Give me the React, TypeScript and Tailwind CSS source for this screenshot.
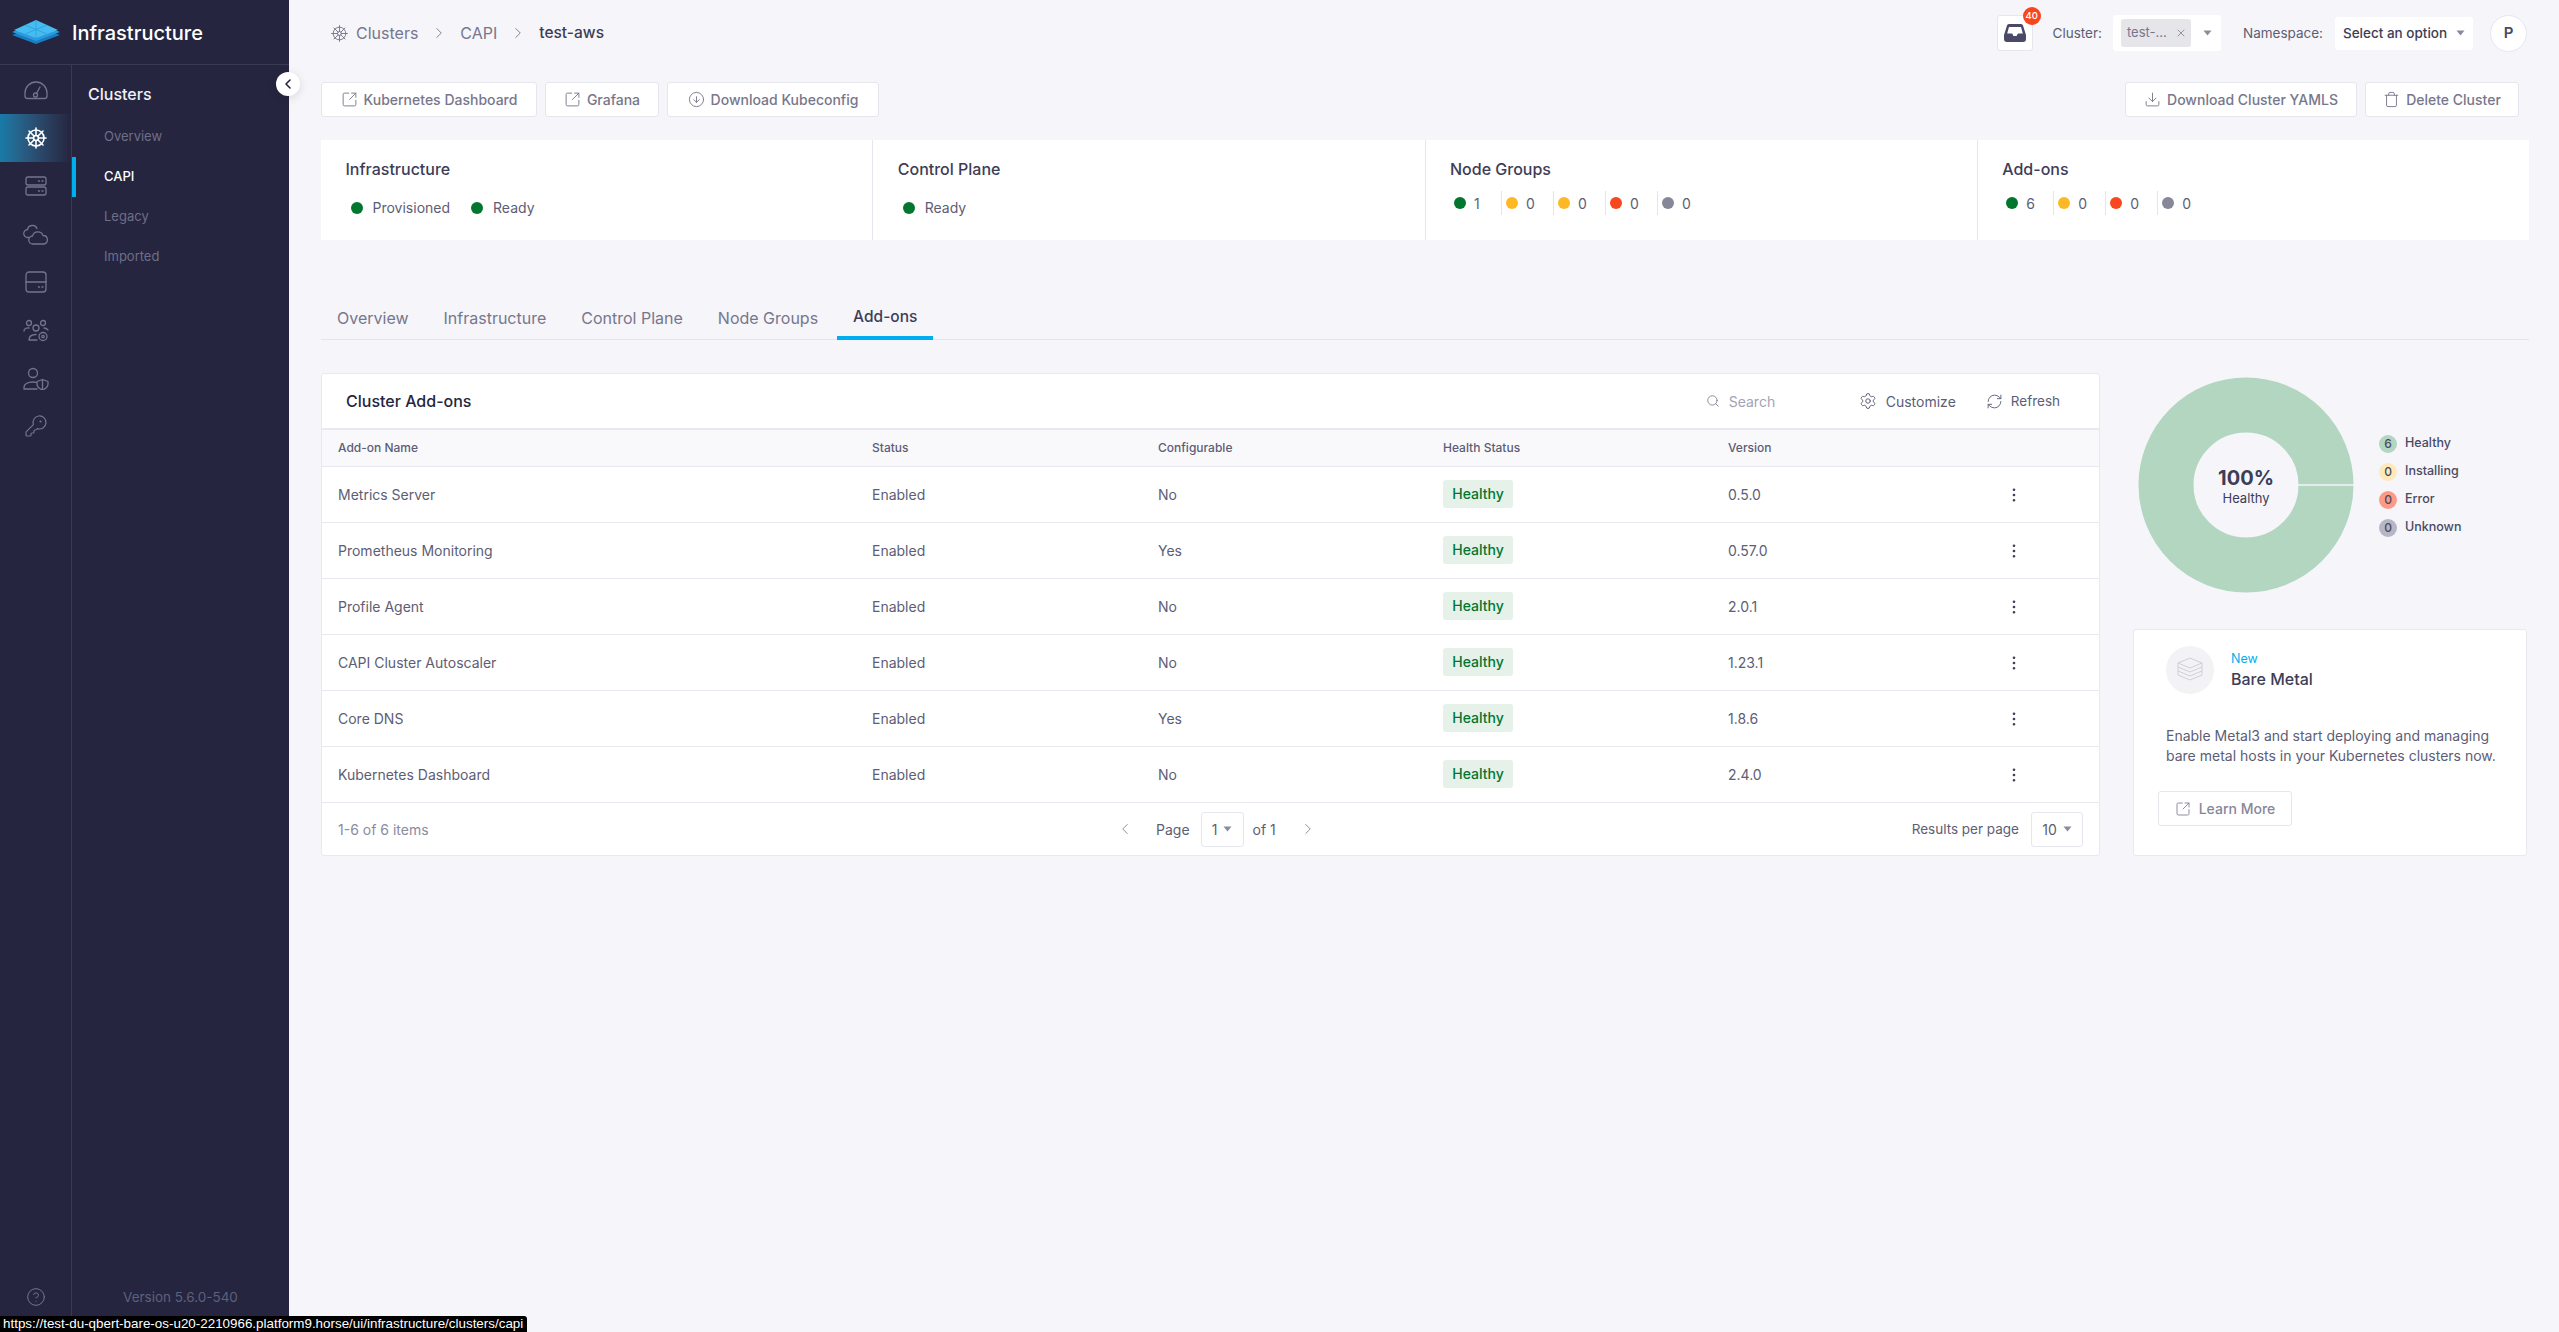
import {
  ChevronLeft,
  ChevronRight,
  CircleArrowDown,
  CircleHelp,
  Download,
  EllipsisVertical,
  KeyRound,
  RefreshCw,
  Search,
  Settings,
  ShipWheel,
  SquareArrowOutUpRight,
  Trash,
  X,
} from "lucide-react";

const addons = [
  { name: "Metrics Server", configurable: "No", version: "0.5.0" },
  { name: "Prometheus Monitoring", configurable: "Yes", version: "0.57.0" },
  { name: "Profile Agent", configurable: "No", version: "2.0.1" },
  { name: "CAPI Cluster Autoscaler", configurable: "No", version: "1.23.1" },
  { name: "Core DNS", configurable: "Yes", version: "1.8.6" },
  { name: "Kubernetes Dashboard", configurable: "No", version: "2.4.0" },
];

function Caret({ className = "text-[#8b8b9e]" }: { className?: string }) {
  return (
    <svg width="9" height="6" viewBox="0 0 9 6" className={className}>
      <path d="M0.5 0.5h8L4.5 5.5z" fill="currentColor" />
    </svg>
  );
}

function Logo() {
  return (
    <svg width="50" height="24" viewBox="0 0 50 24">
      <path d="M25 6 49 15 25 24 1 15z" fill="#1a7cc4" />
      <path d="M25 3 49 12 25 21 1 12z" fill="#2a9bdc" />
      <path d="M25 0 47 10 25 18 3 10z" fill="#45bdf0" />
      <path d="M14 5 36 14M36 5 14 14M25 0v18" stroke="#2a9bdc" strokeWidth="0.7" fill="none" />
    </svg>
  );
}

function RailSvg({ children }: { children: React.ReactNode }) {
  return (
    <svg width="26" height="24" viewBox="0 0 26 24" fill="none" stroke="#74758c" strokeWidth="1.3" strokeLinecap="round" strokeLinejoin="round">
      {children}
    </svg>
  );
}

const railIcons = [
  <RailSvg key="gauge">
    <path d="M4.5 20.5C2.8 20.5 2 19.6 2 18V15A11 11 0 0 1 24 15V18C24 19.6 23.2 20.5 21.5 20.5Z" />
    <path d="M13.5 15.5 17 9" />
    <circle cx="12.5" cy="17" r="2" />
  </RailSvg>,
  <ShipWheel key="wheel" size={24} color="#ffffff" strokeWidth={1.6} />,
  <RailSvg key="server">
    <rect x="3" y="3" width="20" height="8" rx="2" />
    <rect x="3" y="13" width="20" height="8" rx="2" />
    <path d="M15.5 7h1M19 7h1M15.5 17h1M19 17h1" />
  </RailSvg>,
  <RailSvg key="clouds">
    <path d="M6 15.5H5A4 4 0 0 1 4.5 7.5 5 5 0 0 1 14 6.5" />
    <path d="M10 22a4 4 0 0 1-.5-8 5.5 5.5 0 0 1 10.5-.5 4.3 4.3 0 0 1 1 8.5z" />
  </RailSvg>,
  <RailSvg key="disk">
    <rect x="3" y="2" width="20" height="20" rx="3" />
    <path d="M3 12h20M15.5 17h1M19 17h1" />
  </RailSvg>,
  <RailSvg key="users">
    <circle cx="6" cy="5" r="2.5" />
    <circle cx="20" cy="5" r="2.5" />
    <circle cx="13" cy="10" r="3" />
    <path d="M1 13c0-2 2.5-3.5 5-3M6 22c0-3.500 3-5.500 7-5.500M6 22h8" />
    <path d="M21 10c1.500 0 3 .8 4 2" />
    <circle cx="20" cy="18.500" r="4" />
    <circle cx="20" cy="18.500" r="1.200" />
  </RailSvg>,
  <RailSvg key="shield">
    <circle cx="10" cy="7" r="4.500" />
    <path d="M1 23v-1.500c0-3.500 4-5.500 9-5.500 1 0 2 .1 3 .3M1 23h13" />
    <path d="M19.500 13.500 25 15.500V18c0 3-2.500 4.800-5.500 6-3-1.200-5.500-3-5.500-6v-2.500zM19.500 13.500V24" />
  </RailSvg>,
  <KeyRound key="key" size={24} color="#74758c" strokeWidth={1.2} />,
];

function Sidebar() {
  return (
    <aside className="relative flex h-full w-[289px] shrink-0 flex-col bg-[#25253f]">
      <div className="flex h-[65px] shrink-0 items-center gap-[11px] border-b border-[#3a3a55] pl-[11px]">
        <Logo />
        <span className="pt-[1px] text-[20px] font-medium text-white">Infrastructure</span>
      </div>
      <div className="flex min-h-0 flex-1">
        <nav className="flex w-[72px] shrink-0 flex-col border-r border-[#3a3a55] pt-[1px]">
          {railIcons.map((icon, i) => (
            <div
              key={i}
              className={
                i === 1
                  ? "flex h-[48px] items-center justify-center bg-gradient-to-r from-[#177ba8] to-[#25253f]"
                  : "flex h-[48px] items-center justify-center"
              }
            >
              {icon}
            </div>
          ))}
          <div className="mt-auto flex h-[45px] items-start justify-center">
            <CircleHelp size={20} color="#74758c" strokeWidth={1.2} />
          </div>
        </nav>
        <div className="flex flex-1 flex-col">
          <div className="pl-[16px] pt-[17px] text-[16px] font-medium leading-[24px] text-[#f1f1f6]">Clusters</div>
          <div className="mt-[11px] flex flex-col">
            {["Overview", "CAPI", "Legacy", "Imported"].map((item) => (
              <div
                key={item}
                className={
                  item === "CAPI"
                    ? "flex h-[40px] items-center border-l-4 border-[#00aeef] pl-[28px] text-[13px] font-medium text-white"
                    : "flex h-[40px] items-center pl-[32px] text-[13px] text-[#6e6f87]"
                }
              >
                {item}
              </div>
            ))}
          </div>
          <div className="mb-[25px] mt-auto pl-[51px] text-[13.5px] leading-[20px] text-[#5f607a]">Version 5.6.0-540</div>
        </div>
      </div>
      <button className="absolute left-[276px] top-[72px] flex h-[24px] w-[24px] items-center justify-center rounded-full bg-white shadow-[0_2px_10px_rgba(0,0,0,0.12)]">
        <ChevronLeft size={16} color="#25253f" strokeWidth={2.4} />
      </button>
    </aside>
  );
}

function ActionButton({ icon, label, className = "" }: { icon: React.ReactNode; label: string; className?: string }) {
  return (
    <button className={`flex h-[35px] items-center justify-center gap-[6px] rounded-[3px] border border-[#e6e6ee] bg-white text-[14px] font-medium text-[#77778c] ${className}`}>
      {icon}
      {label}
    </button>
  );
}

function Dot({ color }: { color: string }) {
  return <span className={`h-[12px] w-[12px] shrink-0 rounded-full ${color}`} />;
}

function Counts({ items }: { items: { color: string; value: number }[] }) {
  return (
    <div className="mt-[10px] flex h-[24px] items-center">
      {items.map((item, i) => (
        <div
          key={i}
          className={
            i === items.length - 1
              ? "flex h-[24px] w-[52px] items-center gap-[8px] pl-[4px] text-[14px] text-[#5d5d75]"
              : "flex h-[24px] w-[52px] items-center gap-[8px] border-r border-[#e4e4ec] pl-[4px] text-[14px] text-[#5d5d75]"
          }
        >
          <Dot color={item.color} />
          {item.value}
        </div>
      ))}
    </div>
  );
}

function SummaryCard({ title, children, last }: { title: string; children: React.ReactNode; last?: boolean }) {
  return (
    <div className={last ? "flex-1 pl-[24.5px] pt-[17px]" : "flex-1 border-r border-[#e6e6ee] pl-[24.5px] pt-[17px]"}>
      <div className="text-[16px] font-medium leading-[24px] text-[#3d3d56]">{title}</div>
      {children}
    </div>
  );
}

function StatusLabel({ label }: { label: string }) {
  return (
    <div className="flex items-center gap-[10px] text-[14px] text-[#5d5d75]">
      <Dot color="bg-[#00762f]" />
      {label}
    </div>
  );
}

function Summary() {
  const green = "bg-[#00762f]";
  const yellow = "bg-[#fdb924]";
  const red = "bg-[#f8471f]";
  const gray = "bg-[#87879a]";
  return (
    <div className="mt-[23px] flex h-[100px] bg-white">
      <SummaryCard title="Infrastructure">
        <div className="mt-[16px] flex gap-[21px] pl-[5px]">
          <StatusLabel label="Provisioned" />
          <StatusLabel label="Ready" />
        </div>
      </SummaryCard>
      <SummaryCard title="Control Plane">
        <div className="mt-[16px] flex pl-[5px]">
          <StatusLabel label="Ready" />
        </div>
      </SummaryCard>
      <SummaryCard title="Node Groups">
        <Counts
          items={[
            { color: green, value: 1 },
            { color: yellow, value: 0 },
            { color: yellow, value: 0 },
            { color: red, value: 0 },
            { color: gray, value: 0 },
          ]}
        />
      </SummaryCard>
      <SummaryCard title="Add-ons" last>
        <Counts
          items={[
            { color: green, value: 6 },
            { color: yellow, value: 0 },
            { color: red, value: 0 },
            { color: gray, value: 0 },
          ]}
        />
      </SummaryCard>
    </div>
  );
}

function Tabs() {
  return (
    <div className="mt-[56px] flex h-[44px] items-stretch gap-[3px] border-b border-[#e4e4ec] text-[16px]">
      {["Overview", "Infrastructure", "Control Plane", "Node Groups", "Add-ons"].map((tab) => (
        <div
          key={tab}
          className={
            tab === "Add-ons"
              ? "-mb-px flex items-center border-b-4 border-[#00aeef] px-[16px] pt-[2px] text-[15.5px] font-medium text-[#3d3d56]"
              : "flex items-center px-[16px] text-[#77778c]"
          }
        >
          {tab}
        </div>
      ))}
    </div>
  );
}

function AddonsTable() {
  const cols = "grid grid-cols-[534px_286px_285px_285px_1fr] items-center pl-[16px]";
  return (
    <div className="flex h-[483px] w-[1779px] shrink-0 flex-col rounded-[3px] border border-[#e8e8ef] bg-white">
      <div className="flex h-[56px] shrink-0 items-center border-b-2 border-[#e8e8ef] pl-[24px] pr-[39px]">
        <span className="text-[16px] font-medium text-[#25253f]">Cluster Add-ons</span>
        <div className="ml-auto flex items-center gap-[9px] text-[14px] text-[#a3a3b4]">
          <Search size={14} color="#77778c" strokeWidth={1.4} />
          <span className="w-[130px]">Search</span>
        </div>
        <div className="flex items-center gap-[9px] text-[14px] text-[#5d5d75]">
          <Settings size={18} strokeWidth={1.3} />
          Customize
        </div>
        <div className="ml-[30px] flex items-center gap-[8px] text-[13.5px] text-[#5d5d75]">
          <RefreshCw size={17} strokeWidth={1.3} />
          Refresh
        </div>
      </div>
      <div className={`${cols} h-[37px] shrink-0 border-b border-[#e8e8ef] bg-[#f9f9fc] text-[12px] font-medium text-[#5d5d75]`}>
        <span>Add-on Name</span>
        <span>Status</span>
        <span>Configurable</span>
        <span>Health Status</span>
        <span>Version</span>
      </div>
      {addons.map((addon) => (
        <div key={addon.name} className={`${cols} relative h-[56px] shrink-0 border-b border-[#e8e8ef] text-[14px] text-[#5d5d75]`}>
          <span>{addon.name}</span>
          <span>Enabled</span>
          <span>{addon.configurable}</span>
          <span className="-mt-[2px]">
            <span className="flex h-[28px] w-[70px] items-center justify-center rounded-[3px] bg-[#e5f1e9] text-[14px] font-medium text-[#00762f]">Healthy</span>
          </span>
          <div className="flex items-center justify-between pr-[76px]">
            <span>{addon.version}</span>
            <EllipsisVertical size={18} color="#3d3d56" strokeWidth={1.6} />
          </div>
        </div>
      ))}
      <div className="flex flex-1 items-center pl-[16px] pr-[16px] text-[14px] text-[#5d5d75]">
        <span className="w-[778px] text-[#8b8b9e]">1-6 of 6 items</span>
        <ChevronLeft size={18} color="#8b8b9e" strokeWidth={1.3} />
        <span className="ml-[22px]">Page</span>
        <div className="ml-[11px] flex h-[35px] w-[43px] items-center justify-center gap-[6px] rounded-[3px] border border-[#e6e6ee]">
          1 <Caret />
        </div>
        <span className="ml-[9px]">of 1</span>
        <ChevronRight size={18} color="#8b8b9e" strokeWidth={1.3} className="ml-[23px]" />
        <span className="ml-auto text-[13.5px]">Results per page</span>
        <div className="ml-[12px] flex h-[35px] w-[52px] items-center justify-center gap-[6px] rounded-[3px] border border-[#e6e6ee]">
          10 <Caret />
        </div>
      </div>
    </div>
  );
}

function Donut() {
  const legend = [
    { n: 6, label: "Healthy", bg: "bg-[#b2d6c0]" },
    { n: 0, label: "Installing", bg: "bg-[#feeab9]" },
    { n: 0, label: "Error", bg: "bg-[#fc9a85]" },
    { n: 0, label: "Unknown", bg: "bg-[#b6b6c4]" },
  ];
  return (
    <div className="flex h-[256px] items-center pb-[32px] pl-[5px]">
      <div className="relative h-[216px] w-[216px] shrink-0">
        <svg width="216" height="216" viewBox="0 0 216 216">
          <circle cx="108" cy="108" r="80" fill="none" stroke="#b2d6c0" strokeWidth="55" />
          <path d="M160 108H216" stroke="#f5f5fa" strokeWidth="1.500" />
        </svg>
        <div className="absolute inset-0 flex flex-col items-center justify-center pt-[2px] text-[#3d3d56]">
          <span className="text-[20px] font-bold leading-[24px]">100%</span>
          <span className="text-[13px] leading-[16px]">Healthy</span>
        </div>
      </div>
      <div className="ml-[25px] mt-[1px] flex flex-col gap-[10px]">
        {legend.map((item) => (
          <div key={item.label} className="flex h-[18px] items-center gap-[8px] text-[12.500px] font-medium text-[#4a4a62]">
            <span className={`flex h-[18px] w-[18px] items-center justify-center rounded-full text-[12px] ${item.bg}`}>{item.n}</span>
            {item.label}
          </div>
        ))}
      </div>
    </div>
  );
}

function BareMetal() {
  return (
    <div className="flex h-[227px] flex-col rounded-[3px] border border-[#e8e8ef] bg-white pl-[32px] pt-[16px]">
      <div className="flex items-center gap-[17px]">
        <div className="flex h-[48px] w-[48px] items-center justify-center rounded-full bg-[#f3f3f6]">
          <svg width="28" height="28" viewBox="0 0 28 28" fill="none" stroke="#cfcfd8" strokeWidth="1">
            <path d="M14 2 26 7 14 12 2 7z" />
            <path d="M2 7v4l12 5 12-5V7M2 11v4l12 5 12-5v-4M2 15v4l12 5 12-5v-4" />
          </svg>
        </div>
        <div className="flex flex-col">
          <span className="text-[12.500px] leading-[17px] text-[#00aeef]">New</span>
          <span className="text-[16px] font-medium leading-[24px] text-[#3d3d56]">Bare Metal</span>
        </div>
      </div>
      <p className="mt-[32px] w-[345px] text-[14px] leading-[20px] text-[#5d5d75]">
        Enable Metal3 and start deploying and managing bare metal hosts in your Kubernetes clusters now.
      </p>
      <button className="-ml-[8px] mt-[25px] flex h-[35px] w-[134px] items-center justify-center gap-[8px] rounded-[3px] border border-[#e6e6ee] text-[14px] font-medium text-[#87879a]">
        <SquareArrowOutUpRight size={16} strokeWidth={1.4} />
        Learn More
      </button>
    </div>
  );
}

function TopBar() {
  return (
    <div className="flex h-[66px] items-center pr-[2px]">
      <div className="flex items-center pl-[9px] text-[16px] text-[#77778c]">
        <ShipWheel size={19} strokeWidth={1.2} />
        <span className="ml-[7px]">Clusters</span>
        <ChevronRight size={18} strokeWidth={1.2} className="mx-[12px]" />
        <span>CAPI</span>
        <ChevronRight size={18} strokeWidth={1.2} className="mx-[12px]" />
        <span className="text-[15.5px] font-medium text-[#3d3d56]">test-aws</span>
      </div>
      <div className="relative ml-auto flex h-[36px] w-[36px] items-center justify-center rounded-[3px] border border-[#e6e6ee] bg-white">
        <svg width="22" height="18" viewBox="0 0 22 18">
          <path d="M5 0h12a2 2 0 0 1 2 1.500L22 11v4a3 3 0 0 1-3 3H3a3 3 0 0 1-3-3v-4L3 1.500A2 2 0 0 1 5 0zM5 3 3.200 9.500h5L9.500 12h3L14 9.500h4.800L17 3z" fill="#4a4a68" fillRule="evenodd" />
        </svg>
        <span className="absolute -right-[9px] -top-[9px] flex h-[18px] w-[18px] items-center justify-center rounded-full bg-[#f8471f] text-[9.500px] font-medium text-white">40</span>
      </div>
      <span className="ml-[20px] text-[13.5px] text-[#5d5d75]">Cluster:</span>
      <div className="ml-[11px] flex h-[36px] w-[108px] items-center rounded-[3px] bg-white pl-[8px]">
        <span className="flex h-[28px] w-[70px] items-center gap-[8px] rounded-[3px] bg-[#e5e5ea] pl-[6px] text-[13px] text-[#77778c]">
          test-...
          <X size={12} strokeWidth={1.5} />
        </span>
        <Caret className="ml-[12px] text-[#8b8b9e]" />
      </div>
      <span className="ml-[22px] text-[13.5px] text-[#5d5d75]">Namespace:</span>
      <div className="ml-[12px] flex h-[33px] w-[138px] items-center justify-center gap-[9px] rounded-[3px] bg-white text-[13.500px] font-medium text-[#3d3d56]">
        Select an option
        <Caret />
      </div>
      <div className="ml-[17px] flex h-[37px] w-[37px] items-center justify-center rounded-full border border-[#e6e6ee] bg-white text-[15px] font-semibold text-[#4a4a62]">P</div>
    </div>
  );
}

export default function App() {
  return (
    <div className="relative flex h-[1332px] w-[2559px] overflow-hidden bg-[#f5f5fa] font-['Inter',sans-serif]">
      <Sidebar />
      <main className="flex min-w-0 flex-1 flex-col pl-[32px] pr-[30px]">
        <TopBar />
        <div className="mt-[16px] flex gap-[8px] pr-[10px]">
          <ActionButton icon={<SquareArrowOutUpRight size={17} strokeWidth={1.3} />} label="Kubernetes Dashboard" className="w-[216px]" />
          <ActionButton icon={<SquareArrowOutUpRight size={17} strokeWidth={1.3} />} label="Grafana" className="w-[114px]" />
          <ActionButton icon={<CircleArrowDown size={17} strokeWidth={1.3} />} label="Download Kubeconfig" className="w-[212px]" />
          <ActionButton icon={<Download size={17} strokeWidth={1.3} />} label="Download Cluster YAMLS" className="ml-auto w-[232px]" />
          <ActionButton icon={<Trash size={17} strokeWidth={1.3} />} label="Delete Cluster" className="w-[154px]" />
        </div>
        <Summary />
        <Tabs />
        <div className="mt-[33px] flex gap-[33px]">
          <AddonsTable />
          <div className="flex w-[394px] shrink-0 flex-col">
            <Donut />
            <BareMetal />
          </div>
        </div>
      </main>
      <div className="absolute bottom-0 left-0 h-[16px] w-[527px] whitespace-nowrap rounded-tr-[3px] bg-black pl-[3px] font-['Liberation_Sans',sans-serif] text-[13.4px] leading-[16px] text-white">
        https://test-du-qbert-bare-os-u20-2210966.platform9.horse/ui/infrastructure/clusters/capi
      </div>
    </div>
  );
}
